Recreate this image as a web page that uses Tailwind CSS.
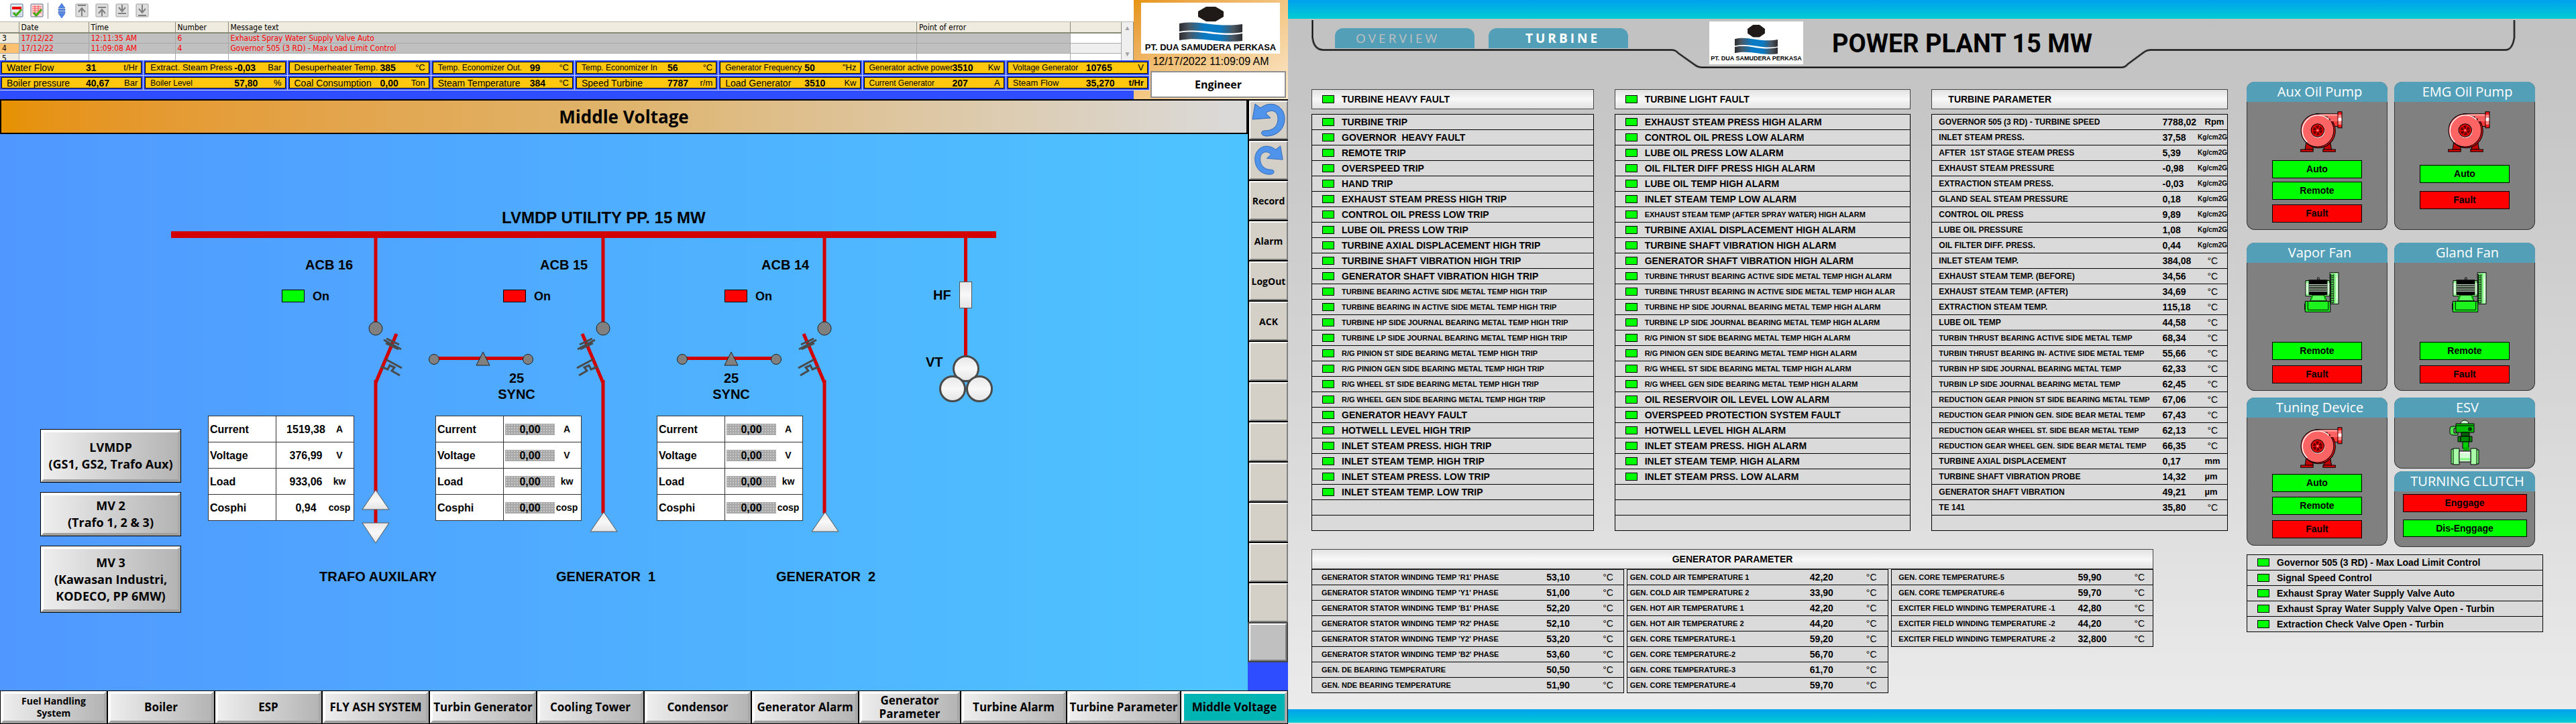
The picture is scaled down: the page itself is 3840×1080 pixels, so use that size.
<!DOCTYPE html>
<html lang="en">
<head>
<meta charset="utf-8">
<title>Power Plant 15 MW - Middle Voltage / Turbine</title>
<script src="https://cdn.jsdelivr.net/npm/@tailwindcss/browser@4"></script>
</head>
<body class="flex min-h-screen bg-[#2e4dff] font-['Liberation_Sans',Arial,sans-serif] text-black">

<!-- Shared drawings -->
<svg class="absolute h-0 w-0" aria-hidden="true">
  <defs>
    <linearGradient id="flag"><stop offset="0" stop-color="#2b2b2f"/><stop offset=".15" stop-color="#4a5763"/><stop offset=".4" stop-color="#0a7ac4"/><stop offset=".65" stop-color="#0a7ac4"/><stop offset=".85" stop-color="#4a5763"/><stop offset="1" stop-color="#2b2b2f"/></linearGradient>
    <linearGradient id="metal" x2="0" y2="1"><stop offset="0" stop-color="#e6e6e6"/><stop offset=".5" stop-color="#f8f8f8"/><stop offset="1" stop-color="#e4e4e4"/></linearGradient>
    <symbol id="logo" viewBox="0 0 94 52" preserveAspectRatio="none">
      <path d="M40 0h14l12 7v8l-12 7H40l-12-7V7z" fill="#1f1a17"/>
      <path d="M0 25c32-6 52 7 94 1v12c-34 6-58-7-94-1z" fill="url(#flag)"/>
      <path d="M0 39c32-6 56 8 94 1v11c-38 4-58-7-94-1z" fill="url(#flag)"/>
    </symbol>
    <symbol id="pump" viewBox="29 47 188 182">
      <g stroke="#000" stroke-width="3">
        <path d="M56 180h24l6 28v10H50z" fill="#c00000"/><path d="M138 200l24-18 6 36h-36z" fill="#c00000"/>
        <path d="M31 217h55v10H31zM130 217h55v10h-55z" fill="#e00000"/>
        <path d="M100 58h98v56h-26z" fill="#ff3838"/>
        <ellipse cx="110" cy="134" rx="75" ry="76" fill="#e01010"/>
        <circle cx="105" cy="132" r="73" fill="#ff6464"/>
        <path d="M196 49h18v72h-18z" fill="#ff1e1e"/>
      </g>
      <path d="M108 60h86v9h-50z" fill="#ff9c9c"/>
      <path d="M150 73h44M162 86h32" stroke="#ff6464" stroke-width="12"/>
      <path d="M198 62h14v44h-14z" fill="#ff8a8a"/><path d="M198 76h14v14h-14z" fill="#fff"/>
      <path d="M60 184a69 69 0 1 1 96-100" fill="none" stroke="#fff" stroke-width="4"/>
      <circle cx="107" cy="134" r="31" fill="#fff"/><circle cx="106" cy="132" r="29" fill="#e80000" stroke="#000" stroke-width="3"/>
      <circle cx="106" cy="132" r="15" fill="none" stroke="#600" stroke-width="13" stroke-dasharray="11 4.7"/>
      <circle cx="106" cy="132" r="5" fill="#ff7070"/>
    </symbol>
    <symbol id="fan" viewBox="47 767 155 181">
      <g stroke="#000" stroke-width="3">
        <path d="M161 769h39v141h-39z" fill="#b9ffb9"/>
        <circle cx="109" cy="796" r="5" fill="#888"/>
        <path d="M52 805h108v70H52z" fill="#8dfb8d"/>
        <path d="M82 870h54l10 26H72z" fill="#5cff5c"/>
        <path d="M50 898h113v48H50z" fill="#1df41d"/>
        <path d="M62 898v39h92v-39" fill="none"/>
      </g>
      <path d="M181 771h5v137h-5z" fill="#66f066"/><path d="M190 790h6v100h-6z" fill="#eaffea"/>
      <path d="M171 775v132" stroke="#000" stroke-width="17"/><path d="M172 776v130" stroke="#5bf05b" stroke-width="11" stroke-dasharray="5 3"/>
      <path d="M66 801h84v69H66z" fill="#000"/>
      <path d="M67 824h82M67 833h82M67 843h82M67 852h82" stroke="#dfffdf" stroke-width="4"/>
      <path d="M54 815h10v50H54zM151 815h8v50h-8z" fill="#d8ffd8"/>
      <path d="M82 872l-6 18M136 872l6 18" stroke="#0a0" stroke-width="8"/>
      <path d="M48 908v28" stroke="#000" stroke-width="3"/>
    </symbol>
    <symbol id="esv" viewBox="3653 625 46 69">
      <g stroke="#000" stroke-width="1">
        <path d="M3670 632c0-8 12-8 12 0z" fill="#c8ffc8"/>
        <path d="M3663 635h-6q-3 0-3 4v5q0 4 5 4h7v-3h-6v-7h3z" fill="#4fe64f"/>
        <path d="M3663 631h27v13h-27z" fill="#00c000"/>
        <path d="M3671 644h12v6h-12z" fill="#006000"/>
        <path d="M3666 650h21v8h-21z" fill="#008c00"/>
        <path d="M3673 658h9v10h-9z" fill="#00d000"/>
        <path d="M3656 669h5v22h-5zM3692 670h5v21h-5z" fill="#7dff7d"/>
        <path d="M3659 668h9v24h-9zM3685 668h9v24h-9z" fill="#a8ffa8"/>
        <path d="M3668 672h17v16h-17z" fill="#d4ffd4"/>
      </g>
      <path d="M3664 634h25" stroke="#000"/><circle cx="3684" cy="639" r="3" fill="#003800"/>
      <path d="M3670 650v8M3683 650v8" stroke="#003000" stroke-width="2"/>
      <path d="M3669 674h15" stroke="#fff" stroke-width="2"/><path d="M3669 684h15" stroke="#7dff7d" stroke-width="3"/>
      <path d="M3674 666h9v5h-9z" fill="#00b000"/>
    </symbol>
  </defs>
</svg>

<!-- ============ Left monitor ============ -->
<main class="flex w-1/2 flex-col">
  <header class="flex h-[150px] border-b-2 border-black">
    <div class="relative z-10 flex min-w-0 flex-1 flex-col">
      <div class="flex h-[33px] items-center gap-[10px] border-b border-[#b8b8a8] bg-white pb-px pl-[15px]">
        <button aria-label="Acknowledge message"><svg class="h-[21px] w-5" viewBox="0 0 20 21"><rect x="1" y="1" width="18" height="19" rx="1" fill="#e4eef8" stroke="#56708c"/><path d="M3 6h14M3 8h14" stroke="#e00" stroke-width="2"/><path d="M3 14h14M3 17h14" stroke="#aab" /><path d="M5 14l4 4 8-9" fill="none" stroke="#3fae10" stroke-width="3"/></svg></button>
        <button aria-label="Acknowledge all"><svg class="h-[21px] w-5" viewBox="0 0 20 21"><rect x="1" y="1" width="18" height="19" rx="1" fill="#ffdcdc" stroke="#56708c"/><path d="M3 5h14M3 8h14M3 11h14M3 14h14M7 3v15M12 3v15" stroke="#f05050"/><path d="M5 14l4 4 8-9" fill="none" stroke="#3fae10" stroke-width="3"/></svg></button>
        <span class="-ml-1 h-6 w-px bg-[#909090]"></span>
        <button aria-label="Sort"><svg class="h-[22px] w-5" viewBox="0 0 20 22"><path d="M10 0l5 7H5zM10 22l5-7H5zM5 8.500h10v2H5zM5 12h10v2H5z" fill="#4f86e8" stroke="#2a59b8" stroke-width=".6"/></svg></button>
        <button aria-label="First message"><svg class="h-[21px] w-5" viewBox="0 0 20 21"><rect x="1" y="1" width="18" height="19" rx="1" fill="#dedede" stroke="#a0a0a0"/><path d="M4 3h12M10 19V8M5 13l5-6 5 6" fill="none" stroke="#808080" stroke-width="2"/></svg></button>
        <button aria-label="Previous message"><svg class="h-[21px] w-5" viewBox="0 0 20 21"><rect x="1" y="1" width="18" height="19" rx="1" fill="#dedede" stroke="#a0a0a0"/><path d="M4 6h12M10 19v-8M5 15l5-6 5 6" fill="none" stroke="#808080" stroke-width="2"/></svg></button>
        <button aria-label="Next message"><svg class="h-[21px] w-5" viewBox="0 0 20 21"><rect x="1" y="1" width="18" height="19" rx="1" fill="#dedede" stroke="#a0a0a0"/><path d="M4 15h12M10 2v8M5 6l5 6 5-6" fill="none" stroke="#808080" stroke-width="2"/></svg></button>
        <button aria-label="Last message"><svg class="h-[21px] w-5" viewBox="0 0 20 21"><rect x="1" y="1" width="18" height="19" rx="1" fill="#dedede" stroke="#a0a0a0"/><path d="M4 18h12M10 2v10M5 8l5 6 5-6" fill="none" stroke="#808080" stroke-width="2"/></svg></button>
      </div>
      <div class="flex h-[57px] overflow-hidden">
        <table class="min-w-0 flex-1 table-fixed font-['DejaVu_Sans_Condensed','DejaVu_Sans',sans-serif] text-[12px] leading-[14px] whitespace-nowrap [&_td]:border-r [&_td]:border-b [&_td]:border-[#a9a9a9] [&_td]:pl-[3px] [&_th]:border-r [&_th]:border-[#8a8a78] [&_th]:pl-[3px]">
          <colgroup><col class="w-[28px]"><col class="w-[104px]"><col class="w-[129px]"><col class="w-[79px]"><col><col class="w-[229px]"><col class="w-[76px]"></colgroup>
          <thead><tr class="h-4 border-b-2 border-[#8a8a78] bg-[#efebde] text-left [&_th]:font-normal"><th></th><th>Date</th><th>Time</th><th>Number</th><th>Message text</th><th>Point of error</th><th></th></tr></thead>
          <tbody class="text-[#f00]">
            <tr class="h-[15px] bg-[#c0c0c0]"><td class="bg-[#efebde] text-black">3</td><td>17/12/22</td><td>12:11:35 AM</td><td>6</td><td>Exhaust Spray Water Supply Valve Auto</td><td></td><td class="bg-white"></td></tr>
            <tr class="h-[15px] bg-[#c0c0c0]"><td class="bg-[#ffc070] text-black">4</td><td>17/12/22</td><td>11:09:08 AM</td><td>4</td><td>Governor 505 (3 RD) - Max Load Limit Control</td><td></td><td class="bg-[#efefef]"></td></tr>
            <tr class="h-[15px] bg-white"><td class="bg-[#efebde] text-black">5</td><td></td><td></td><td></td><td></td><td></td><td></td></tr>
          </tbody>
        </table>
        <div class="flex w-[18px] flex-col items-center justify-between border-r border-[#8a8a78] bg-[#efefef] py-1 text-[10px] leading-[10px] text-[#a0a0a0]"><span>▲</span><span>▼</span></div>
      </div>
      <div class="flex flex-1 bg-[#2e4dff]">
        <div id="status" class="-mr-6 grid h-[45px] flex-1 grid-cols-8 grid-rows-2 bg-[#2e4dff]"></div>
      </div>
    </div>
    <aside class="flex w-[230px] flex-col items-center bg-linear-to-br from-[#e69408] via-[#f3c682] to-[#fbe8cc]">
      <div class="ml-[-1px] mt-1 flex h-[76px] w-[207px] flex-col items-center bg-white pt-[6px]">
        <svg class="h-[52px] w-[94px]"><use href="#logo"/></svg>
        <p class="text-[13px] leading-[18px] font-bold whitespace-nowrap">PT. DUA SAMUDERA PERKASA</p>
      </div>
      <p class="text-[16px] leading-[24px] whitespace-nowrap">12/17/2022 11:09:09 AM</p>
      <div class="mt-[2px] mr-[3px] flex h-10 w-[202px] items-center justify-center self-end border-2 border-[#909090] bg-white font-['Open_Sans','Noto_Sans',sans-serif] text-[16px] font-bold">Engineer</div>
    </aside>
  </header>

  <div class="flex flex-1">
    <section class="flex flex-1 flex-col bg-linear-to-r from-[#5098ff] to-[#4ec4ff]">
      <h1 class="flex h-[50px] items-center justify-center border-2 border-t-0 border-black bg-linear-to-r from-[#e69100] via-[#dfb46c] to-[#dadada] font-['Open_Sans','Noto_Sans',sans-serif] text-[26px] font-bold">Middle Voltage</h1>
      <div class="relative flex-1">
        <svg class="absolute top-0 left-0 h-[830px] w-[1860px]" viewBox="0 200 1860 830">
          <defs>
            <g id="breaker">
              <path d="M0 355V480" stroke="#d20000" stroke-width="5"/>
              <circle cy="490" r="10" fill="#808080" stroke="#222"/>
              <path d="M-31 498L0 571" stroke="#d20000" stroke-width="5"/>
              <path d="M-16 505l-19 9M-12 507l-26 14M-15 512l-19 9M-15 536l-24 13M-8 547l-10 4-3-6-7 3 4 5-12 7" fill="none" stroke="#4a4a4a" stroke-width="3"/>
            </g>
            <g id="sync">
              <path d="M0 534.500H140" stroke="#d20000" stroke-width="5"/>
              <circle cy="536" r="7.500" fill="#808080" stroke="#222"/><circle cx="140" cy="536" r="7.500" fill="#808080" stroke="#222"/>
              <path d="M73 525l10 20H63z" fill="#808080" stroke="#222"/>
            </g>
          </defs>
          <path d="M255 350H1485" stroke="#d20000" stroke-width="10"/>
          <use href="#breaker" transform="translate(560) scale(-1 1)"/><use href="#breaker" x="899"/><use href="#breaker" x="1229"/>
          <path d="M560 567V780M899 567V766M1229 567V766M1439.500 355V535" stroke="#d20000" stroke-width="5"/>
          <g fill="url(#metal)" stroke="#555">
            <path d="M560 731l20 29h-40z"/><path d="M560 810l20-30h-40z"/><path d="M900 764l20 29h-40z"/><path d="M1230 764l20 29h-40z"/>
            <rect x="1430.500" y="420.500" width="18" height="39"/>
            <g stroke="#4a4a4a" stroke-width="3"><circle cx="1440" cy="550" r="18.500"/><circle cx="1420" cy="580" r="18.500"/><circle cx="1460" cy="580" r="18.500"/></g>
          </g>
          <use href="#sync" x="647"/><use href="#sync" x="1017"/>
          <g stroke="#000"><rect x="420.500" y="432.500" width="33" height="18" fill="#0f0"/><rect x="750.500" y="432.500" width="33" height="18" fill="#f00"/><rect x="1080.500" y="432.500" width="33" height="18" fill="#f00"/></g>
          <g font-weight="bold" font-size="20">
            <text x="748" y="333" font-size="24">LVMDP UTILITY PP. 15 MW</text>
            <text x="455" y="402">ACB 16</text><text x="805" y="402">ACB 15</text><text x="1135" y="402">ACB 14</text>
            <g font-size="18"><text x="466" y="448">On</text><text x="796" y="448">On</text><text x="1126" y="448">On</text></g>
            <text x="1391" y="447">HF</text><text x="1380" y="547">VT</text>
            <g text-anchor="middle"><text x="770" y="571">25</text><text x="770" y="595">SYNC</text><text x="1090" y="571">25</text><text x="1090" y="595">SYNC</text></g>
            <text x="476" y="867">TRAFO AUXILARY</text>
            <text x="829" y="867" xml:space="preserve">GENERATOR  1</text><text x="1157" y="867" xml:space="preserve">GENERATOR  2</text>
          </g>
        </svg>
        <div id="meters" class="font-bold"></div>
        <nav aria-label="Panels" class="absolute top-[440px] left-[60px] flex w-[210px] flex-col gap-[14px] font-['Open_Sans','Noto_Sans',sans-serif] text-[18px] leading-[25px] font-bold">
          <button class="h-20 border border-black"><span class="flex h-full flex-col justify-center border-4 border-t-white border-r-[#a8a8a8] border-b-[#a0a0a0] border-l-white bg-linear-to-r from-[#eee] to-[#b4b4b4] whitespace-nowrap"><span>LVMDP</span><span>(GS1, GS2, Trafo Aux)</span></span></button>
          <button class="h-[66px] border border-black"><span class="flex h-full flex-col justify-center border-4 border-t-white border-r-[#a8a8a8] border-b-[#a0a0a0] border-l-white bg-linear-to-r from-[#eee] to-[#b4b4b4]"><span>MV 2</span><span>(Trafo 1, 2 &amp; 3)</span></span></button>
          <button class="h-[100px] border border-black"><span class="flex h-full flex-col justify-center border-4 border-t-white border-r-[#a8a8a8] border-b-[#a0a0a0] border-l-white bg-linear-to-r from-[#eee] to-[#b4b4b4]"><span>MV 3</span><span>(Kawasan Industri,</span><span>KODECO, PP 6MW)</span></span></button>
        </nav>
      </div>
    </section>
    <nav id="side" aria-label="Tools" class="-mt-0.5 flex w-[60px] flex-col font-['Open_Sans','Noto_Sans',sans-serif] text-[14px] font-bold"></nav>
  </div>

  <nav id="pages" aria-label="Pages" class="grid h-[50px] grid-cols-[repeat(8,160fr)_152fr_158fr_170fr_160fr] font-['Open_Sans','Noto_Sans',sans-serif] text-[17px] leading-5 font-bold whitespace-nowrap"></nav>
</main>

<!-- ============ Right monitor ============ -->
<main class="flex w-1/2 flex-col border-b-2 border-[#ddd] bg-linear-to-b from-[#c0c0c0] via-[#d4d4d4] to-[#ececec]">
  <div class="h-7 bg-linear-to-b from-[#00a0ee] to-[#00ccd0]"></div>
  <header class="relative flex h-[105px] items-start pl-[70px]">
    <svg class="absolute top-0 left-0 h-[105px] w-[1920px]" viewBox="0 28 1920 105" fill="none"><path id="frame" d="M36.500 30V56q2 18 16 18.500H572q6 0 10 5l24 17q5 4 11 4H1243q5 0 9-5l23-17q5-4 11-4H1815q10 0 13-18V30" stroke="#555" stroke-width="3"/><path d="M36.500 30V56q2 18 16 18.500H572q6 0 10 5l24 17q5 4 11 4H1243q5 0 9-5l23-17q5-4 11-4H1815q10 0 13-18V30" stroke="#000" stroke-width="1"/></svg>
    <nav aria-label="Views" class="relative mt-[14px] flex gap-[21px] font-['Open_Sans','Noto_Sans',sans-serif] text-[19px] leading-[30px] tracking-[4px]">
      <a href="#overview" class="h-[30px] w-[208px] rounded-t-xl bg-[#549fb8] pl-[31px] text-[#c0c0c0]">OVERVIEW</a>
      <a href="#turbine" class="h-[30px] w-[208px] rounded-t-xl bg-[#549fb8] pl-[55px] font-bold text-white">TURBINE</a>
    </nav>
    <div class="relative mt-1 ml-[121px] flex h-16 w-[140px] flex-col items-center bg-white pt-[5px]">
      <svg class="h-11 w-[64px]"><use href="#logo"/></svg>
      <p class="text-[9px] leading-3 font-bold whitespace-nowrap">PT. DUA SAMUDERA PERKASA</p>
    </div>
    <h1 class="relative mt-[14px] ml-[43px] font-['Roboto',sans-serif] text-[38px] leading-[46px] font-bold whitespace-nowrap">POWER PLANT 15 MW</h1>
  </header>

  <div class="flex flex-1 gap-7 pr-[49px] pl-[35px]">
    <div class="min-w-0 flex-1">
      <div class="grid grid-cols-[minmax(0,421fr)_minmax(0,442fr)_minmax(0,442fr)] gap-x-[31px] text-[14px] font-bold whitespace-nowrap">
        <section>
          <h2 class="mb-[7px] flex h-[30px] items-center gap-[11px] border border-[#444] bg-linear-to-b from-[#e2e2e2] via-[#f8f8f8] to-[#e2e2e2] pl-[15px]"><i class="h-3 w-[18px] border border-black bg-[#0f0]"></i>TURBINE HEAVY FAULT</h2>
          <ul id="heavy" class="border border-t-0 border-black bg-[#dadada]"></ul>
        </section>
        <section>
          <h2 class="mb-[7px] flex h-[30px] items-center gap-[11px] border border-[#444] bg-linear-to-b from-[#e2e2e2] via-[#f8f8f8] to-[#e2e2e2] pl-[15px]"><i class="h-3 w-[18px] border border-black bg-[#0f0]"></i>TURBINE LIGHT FAULT</h2>
          <ul id="light" class="border border-t-0 border-black bg-[#dadada]"></ul>
        </section>
        <section>
          <h2 class="mb-[7px] flex h-[30px] items-center border border-[#444] bg-linear-to-b from-[#e2e2e2] via-[#f8f8f8] to-[#e2e2e2] pl-6">TURBINE PARAMETER</h2>
          <table class="w-full table-fixed border-x border-b border-black bg-[#dadada]"><colgroup><col><col class="w-[51px]"><col class="w-[46px]"></colgroup><tbody id="turbine"></tbody></table>
        </section>
      </div>
      <section class="mt-[27px] mr-[111px] whitespace-nowrap">
        <h2 class="flex h-[30px] items-center justify-center border border-[#444] bg-linear-to-b from-[#e2e2e2] via-[#f8f8f8] to-[#e2e2e2] text-[14px] font-bold">GENERATOR PARAMETER</h2>
        <div class="grid grid-cols-[466fr_391fr_391fr] items-start gap-x-1 text-[11px] font-bold">
          <table class="w-full table-fixed border-x border-b border-black bg-[#dadada]"><colgroup><col><col class="w-[84px]"><col class="w-[31px]"></colgroup><tbody id="genA"></tbody></table>
          <table class="w-full table-fixed border-x border-b border-black bg-[#dadada]"><colgroup><col><col class="w-[84px]"><col class="w-[33px]"></colgroup><tbody id="genB"></tbody></table>
          <table class="w-full table-fixed border-x border-b border-black bg-[#dadada]"><colgroup><col><col class="w-[84px]"><col class="w-[28px]"></colgroup><tbody id="genC"></tbody></table>
        </div>
      </section>
    </div>

    <div class="-mt-[11px] w-[442px]">
      <div class="grid grid-cols-[210px_210px] gap-x-[10px] gap-y-[19px]" id="cards"></div>
      <ul id="notes" class="mt-[11px] border border-t-0 border-black bg-[#dadada] text-[14px] font-bold whitespace-nowrap"></ul>
    </div>
  </div>
  <div class="h-5 bg-linear-to-b from-[#00a0ee] to-[#00ccd0]"></div>
</main>

<script>
const put = (id, html) => document.getElementById(id).innerHTML = html;

/* status strip: label, value, unit, label size */
const startCols = ['grid-cols-[125px_1fr_auto]','grid-cols-[132px_1fr_auto]','grid-cols-[135px_1fr_auto]','grid-cols-[144px_1fr_auto]','grid-cols-[135px_1fr_auto]','grid-cols-[125px_1fr_auto]','grid-cols-[131px_1fr_auto]','grid-cols-[116px_1fr_auto]'];
const L = 'text-[14px]', M = 'text-[13px]', S = 'text-[12px]';
const status = [
 ['Water Flow','31','t/Hr',L],['Extract. Steam Press','-0,03','Bar',M],['Desuperheater Temp.','385','°C',M],['Temp. Economizer Out.','99','°C',S],['Temp. Economizer In','56','°C',S],['Generator Frequency','50','"Hz',S],['Generator active power','3510','Kw',S],['Voltage Generator','10765','V',S],
 ['Boiler pressure','40,67','Bar',L],['Boiler Level','57,80','%',S],['Coal Consumption','0,00','Ton',L],['Steam Temperature','384','°C',L],['Speed Turbine','7787','r/m',L],['Load Generator','3510','Kw',L],['Current Generator','207','A',S],['Steam Flow','35,270','<b>t/Hr</b>',M]];
put('status', status.map(([l, v, u, s], i) => `<div class="min-w-0 border-r border-b border-[#d8dcf0] p-[2px]"><div class="grid h-full items-center border border-black bg-[#ffc80e] pr-[5px] pl-[7px] text-[13px] leading-4 whitespace-nowrap overflow-hidden ${startCols[i % 8]}"><span class="${s}">${l}</span><b class="-ml-[7px] text-[14px]">${v}</b><span>${u}</span></div></div>`).join(''));

/* feeder meters */
const rows = ['Current','Voltage','Load','Cosphi'], units = ['A','V','kw','cosp'];
const live = v => `<span class="ml-[5px] w-[78px] text-center">${v}</span>`;
const dead = v => `<span class="ml-[2px] w-[74px] bg-[#a8a8a8] bg-[radial-gradient(#c8c8c8_1px,transparent_1px)] bg-size-[4px_4px] text-center leading-[17px]">${v}</span>`;
put('meters', [['left-[310px]', ['1519,38','376,99','933,06','0,94'], live, 'w-[22px]'], ['left-[649px]', ['0,00','0,00','0,00','0,00'], dead, 'w-[36px]'], ['left-[979px]', ['0,00','0,00','0,00','0,00'], dead, 'w-[36px]']]
 .map(([pos, vals, cell, uw]) => `<table class="absolute top-[420px] ${pos} w-[218px] table-fixed border border-[#333] bg-white text-[16px] leading-[17px]"><tbody>${rows.map((r, i) => `<tr class="h-[39px] border-b border-[#333]"><th scope="row" class="w-[101px] border-r border-[#333] pl-[2px] text-left">${r}</th><td><div class="flex items-center">${cell(vals[i])}<span class="flex ${uw} justify-center text-[14px]">${units[i]}</span></div></td></tr>`).join('')}</tbody></table>`).join(''));

/* tool column */
const undo = '<svg class="h-[50px] w-[52px]" viewBox="0 0 52 50"><path d="M2 24L6 1l8 6C31-6 50 5 50 23c0 16-12 26-27 26-9 0-10-8-3-8 13 0 20-7 20-18 0-12-11-15-18-8l7 7z" fill="#4f93ea" stroke="#2f66b4"/></svg>';
const redo = '<svg class="h-[48px] w-[46px]" viewBox="0 0 52 50"><path d="M50 24L46 1l-8 6C21-6 3 5 3 23c0 16 11 26 25 26 9 0 9-8 3-8-12 0-19-7-19-18 0-12 11-15 18-8l-7 7z" fill="#4f93ea" stroke="#2f66b4"/></svg>';
const side = [undo, redo, 'Record', 'Alarm', 'LogOut', 'ACK', '', '', '', '', '', '', ''];
put('side', side.map((s, i) => `<button ${i < 2 ? `aria-label="${i ? 'Forward' : 'Back'}"` : ''} class="h-[60px] border-t-2 border-l-2 border-black"><span class="flex h-full items-center justify-center border-2 border-t-white border-r-[#808080] border-b-[#808080] border-l-white bg-[#d4d0c8]">${s}</span></button>`).join('') + '<button class="h-[60px] border-2 border-[#444]"><span class="flex h-full border-2 border-t-white border-r-[#808080] border-b-[#808080] border-l-white bg-[#c0c0c0]"></span></button>');

/* page buttons */
put('pages', ['Fuel Handling<br>System','Boiler','ESP','FLY ASH SYSTEM','Turbin Generator','Cooling Tower','Condensor','Generator Alarm','Generator<br>Parameter','Turbine Alarm','Turbine Parameter','Middle Voltage']
 .map((t, i) => `<button class="min-w-0 border border-black"><span class="flex h-full items-center justify-center border-4 border-t-white border-r-[#a8a8a8] border-b-[#a0a0a0] border-l-white ${i === 11 ? 'bg-[#00b4b4]' : 'bg-linear-to-r from-[#eee] to-[#b4b4b4]'} ${i === 0 ? 'text-[14px] leading-[18px]' : ''}"><span>${t}</span></span></button>`).join(''));

/* fault lists; a leading ~ marks a long line set small */
const led = (t) => { const small = t[0] === '~'; return `<li class="flex h-[23px] items-center gap-[11px] border-t border-black pl-[15px]">${t ? `<i class="h-3 w-[18px] shrink-0 border border-black bg-[#0f0]"></i><span class="${small ? 'text-[11px]' : ''} whitespace-pre">${small ? t.slice(1) : t}</span>` : ''}</li>`; };
put('heavy', ['TURBINE TRIP','GOVERNOR  HEAVY FAULT','REMOTE TRIP','OVERSPEED TRIP','HAND TRIP','EXHAUST STEAM PRESS HIGH TRIP','CONTROL OIL PRESS LOW TRIP','LUBE OIL PRESS LOW TRIP','TURBINE AXIAL DISPLACEMENT HIGH TRIP','TURBINE SHAFT VIBRATION HIGH TRIP','GENERATOR SHAFT VIBRATION HIGH TRIP','~TURBINE BEARING ACTIVE SIDE METAL TEMP HIGH TRIP','~TURBINE BEARING IN ACTIVE SIDE METAL TEMP HIGH TRIP','~TURBINE HP SIDE JOURNAL BEARING METAL TEMP HIGH TRIP','~TURBINE LP SIDE JOURNAL BEARING METAL TEMP HIGH TRIP','~R/G PINION ST SIDE BEARING METAL TEMP HIGH TRIP','~R/G PINION GEN SIDE BEARING METAL TEMP HIGH TRIP','~R/G WHEEL ST SIDE BEARING METAL TEMP HIGH TRIP','~R/G WHEEL GEN SIDE BEARING METAL TEMP HIGH TRIP','GENERATOR HEAVY FAULT','HOTWELL LEVEL HIGH TRIP','INLET STEAM PRESS. HIGH TRIP','INLET STEAM TEMP. HIGH TRIP','INLET STEAM PRESS. LOW TRIP','INLET STEAM TEMP. LOW TRIP','',''].map(led).join(''));
put('light', ['EXHAUST STEAM PRESS HIGH ALARM','CONTROL OIL PRESS LOW ALARM','LUBE OIL PRESS LOW ALARM','OIL FILTER DIFF PRESS HIGH ALARM','LUBE OIL TEMP HIGH ALARM','INLET STEAM TEMP LOW ALARM','~EXHAUST STEAM TEMP (AFTER SPRAY WATER) HIGH ALARM','TURBINE AXIAL DISPLACEMENT HIGH ALARM','TURBINE SHAFT VIBRATION HIGH ALARM','GENERATOR SHAFT VIBRATION HIGH ALARM','~TURBINE THRUST BEARING ACTIVE SIDE METAL TEMP HIGH ALARM','~TURBINE THRUST BEARING IN ACTIVE SIDE METAL TEMP HIGH ALAR','~TURBINE HP SIDE JOURNAL BEARING METAL TEMP HIGH ALARM','~TURBINE LP SIDE JOURNAL BEARING METAL TEMP HIGH ALARM','~R/G PINION ST SIDE BEARING METAL TEMP HIGH ALARM','~R/G PINION GEN SIDE BEARING METAL TEMP HIGH ALARM','~R/G WHEEL ST SIDE BEARING METAL TEMP HIGH ALARM','~R/G WHEEL GEN SIDE BEARING METAL TEMP HIGH ALARM','OIL RESERVOIR OIL LEVEL LOW ALARM','OVERSPEED PROTECTION SYSTEM FAULT','HOTWELL LEVEL HIGH ALARM','INLET STEAM PRESS. HIGH ALARM','INLET STEAM TEMP. HIGH ALARM','INLET STEAM PRSS. LOW ALARM','','',''].map(led).join(''));
put('notes', ['Governor 505 (3 RD) - Max Load Limit Control','Signal Speed Control','Exhaust Spray Water Supply Valve Auto','Exhaust Spray Water Supply Valve Open - Turbin','Extraction Check Valve Open - Turbin'].map(led).join(''));

/* measured values; labels over 40 characters are set one size smaller */
const C = '°C', K = 'Kg/cm2G';
const unitClass = u => u === C ? 'text-[14px] font-normal pl-[16px]' : u === K ? 'text-[10px] font-bold text-right' : 'text-[13px] pl-[12px]';
const param = ([l, v, u]) => `<tr class="h-[23px] border-t border-black leading-4"><th scope="row" class="pl-[10px] text-left ${l && l.length > 40 ? 'text-[11px]' : 'text-[12px]'} whitespace-pre">${l || ''}</th><td class="text-[14px]">${v || ''}</td><td class="${unitClass(u)}">${u || ''}</td></tr>`;
put('turbine', [['GOVERNOR 505 (3 RD) - TURBINE SPEED','7788,02','Rpm'],['INLET STEAM PRESS.','37,58',K],['AFTER  1ST STAGE STEAM PRESS','5,39',K],['EXHAUST STEAM PRESSURE','-0,98',K],['EXTRACTION STEAM PRESS.','-0,03',K],['GLAND SEAL STEAM PRESSURE','0,18',K],['CONTROL OIL PRESS','9,89',K],['LUBE OIL PRESSURE','1,08',K],['OIL FILTER DIFF. PRESS.','0,44',K],['INLET STEAM TEMP.','384,08',C],['EXHAUST STEAM TEMP. (BEFORE)','34,56',C],['EXHAUST STEAM TEMP. (AFTER)','34,69',C],['EXTRACTION STEAM TEMP.','115,18',C],['LUBE OIL TEMP','44,58',C],['TURBIN THRUST BEARING ACTIVE SIDE METAL TEMP','68,34',C],['TURBIN THRUST BEARING IN- ACTIVE SIDE METAL TEMP','55,66',C],['TURBIN HP SIDE JOURNAL BEARING METAL TEMP','62,33',C],['TURBIN LP SIDE JOURNAL BEARING METAL TEMP','62,45',C],['REDUCTION GEAR PINION ST SIDE BEARING METAL TEMP','67,06',C],['REDUCTION GEAR PINION GEN. SIDE BEAR METAL TEMP','67,43',C],['REDUCTION GEAR WHEEL ST. SIDE BEAR METAL TEMP','62,13',C],['REDUCTION GEAR WHEEL GEN. SIDE BEAR METAL TEMP','66,35',C],['TURBINE AXIAL DISPLACEMENT','0,17','mm'],['TURBINE SHAFT VIBRATION PROBE','14,32','µm'],['GENERATOR SHAFT VIBRATION','49,21','µm'],['TE 141','35,80',C],[]].map(param).join(''));
const gen = pad => ([l, v]) => `<tr class="h-[23px] border-t border-black leading-4"><th scope="row" class="${pad} text-left">${l}</th><td class="text-[14px]">${v}</td><td class="text-[14px] font-normal">°C</td></tr>`;
put('genA', [["GENERATOR STATOR WINDING TEMP 'R1' PHASE",'53,10'],["GENERATOR STATOR WINDING TEMP 'Y1' PHASE",'51,00'],["GENERATOR STATOR WINDING TEMP 'B1' PHASE",'52,20'],["GENERATOR STATOR WINDING TEMP 'R2' PHASE",'52,10'],["GENERATOR STATOR WINDING TEMP 'Y2' PHASE",'53,20'],["GENERATOR STATOR WINDING TEMP 'B2' PHASE",'53,60'],['GEN. DE BEARING TEMPERATURE','50,50'],['GEN. NDE BEARING TEMPERATURE','51,90']].map(gen('pl-[14px]')).join(''));
put('genB', [['GEN. COLD AIR TEMPERATURE 1','42,20'],['GEN. COLD AIR TEMPERATURE 2','33,90'],['GEN. HOT AIR TEMPERATURE 1','42,20'],['GEN. HOT AIR TEMPERATURE 2','44,20'],['GEN. CORE TEMPERATURE-1','59,20'],['GEN. CORE TEMPERATURE-2','56,70'],['GEN. CORE TEMPERATURE-3','61,70'],['GEN. CORE TEMPERATURE-4','59,70']].map(gen('pl-[4px]')).join(''));
put('genC', [['GEN. CORE TEMPERATURE-5','59,90'],['GEN. CORE TEMPERATURE-6','59,70'],['EXCITER FIELD WINDING TEMPERATURE -1','42,80'],['EXCITER FIELD WINDING TEMPERATURE -2','44,20'],['EXCITER FIELD WINDING TEMPERATURE -2','32,800']].map(gen('pl-[10px]')).join(''));

/* equipment cards */
const tag = (t, red, gap, size = 'h-[27px] w-[134px]') => `<button class="${gap} ${size} border border-black ${red ? 'bg-[#f00]' : 'bg-[#0f0]'} text-[14px] leading-[25px] font-bold">${t}</button>`;
const card = (title, height, body) => `<section class="flex ${height} flex-col items-center rounded-xl border border-t-0 border-[#333] bg-[#808080]"><h3 class="mx-[-1px] h-[30px] self-stretch rounded-t-xl bg-[#549fb8] pl-2 text-center font-['Open_Sans','Noto_Sans',sans-serif] text-[20px] leading-[29px] text-white">${title}</h3>${body}</section>`;
const pump = '<svg class="mt-[14px] ml-[12px] h-[61px] w-[63px]"><use href="#pump"/></svg>';
const fan = '<svg class="mt-[14px] ml-[14px] h-[60px] w-[52px]"><use href="#fan"/></svg>';
const full = 'h-[221px]';
put('cards',
  card('Aux Oil Pump', full, pump + tag('Auto', 0, 'mt-[12px]') + tag('Remote', 0, 'mt-[5px]') + tag('Fault', 1, 'mt-[7px]')) +
  card('EMG Oil Pump', full, pump + tag('Auto', 0, 'mt-[19px]') + tag('Fault', 1, 'mt-[12px]')) +
  card('Vapor Fan', full, fan + tag('Remote', 0, 'mt-[44px]') + tag('Fault', 1, 'mt-[8px]')) +
  card('Gland Fan', full, fan + tag('Remote', 0, 'mt-[44px]') + tag('Fault', 1, 'mt-[8px]')) +
  '<div class="-mt-[9px]">' + card('Tuning Device', full, pump + tag('Auto', 0, 'mt-[9px]') + tag('Remote', 0, 'mt-[7px]') + tag('Fault', 1, 'mt-[8px]')) + '</div>' +
  '<div class="-mt-[9px] flex flex-col gap-1">' + card('ESV', 'h-[106px]', '<svg class="mt-[3px] h-[69px] w-[46px]"><use href="#esv"/></svg>') +
  card('TURNING CLUTCH', 'h-[113px]', tag('Enggage', 1, 'mt-[4px]', 'h-[27px] w-[185px]') + tag('Dis-Enggage', 0, 'mt-[11px]', 'h-[26px] w-[185px]')) + '</div>');
</script>
</body>
</html>
